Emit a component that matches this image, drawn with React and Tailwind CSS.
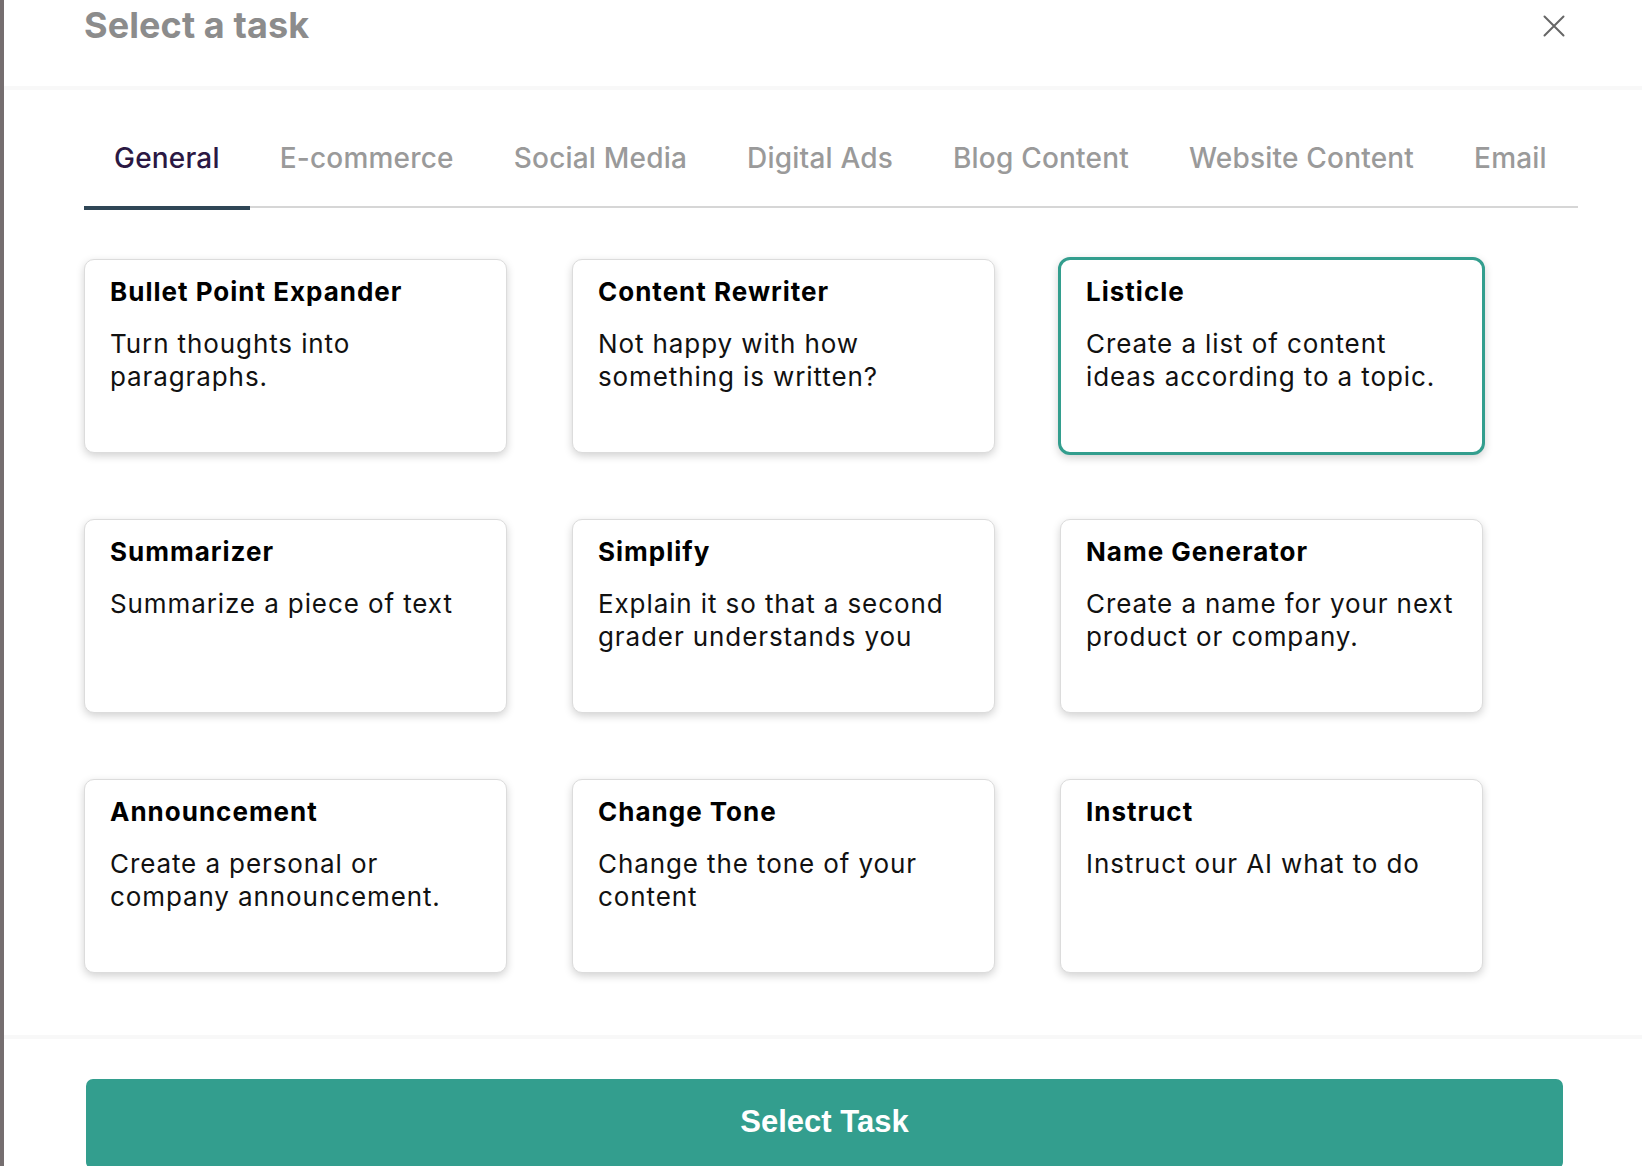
import { useState } from "react";

const tabs = [
  "General",
  "E-commerce",
  "Social Media",
  "Digital Ads",
  "Blog Content",
  "Website Content",
  "Email",
];

const tasks = [
  { title: "Bullet Point Expander", desc: "Turn thoughts into paragraphs." },
  { title: "Content Rewriter", desc: "Not happy with how something is written?" },
  { title: "Listicle", desc: "Create a list of content ideas according to a topic." },
  { title: "Summarizer", desc: "Summarize a piece of text" },
  { title: "Simplify", desc: "Explain it so that a second grader understands you" },
  { title: "Name Generator", desc: "Create a name for your next product or company." },
  { title: "Announcement", desc: "Create a personal or company announcement." },
  { title: "Change Tone", desc: "Change the tone of your content" },
  { title: "Instruct", desc: "Instruct our AI what to do" },
];

function TaskCard({ task, selected, onClick }) {
  return (
    <button
      onClick={onClick}
      className={
        selected
          ? "-m-[2px] h-[198px] rounded-[12px] border-[3px] border-[#339e8e] bg-white px-[25px] pt-[17px] text-left align-top shadow-[0_3px_9px_rgba(0,0,0,0.18)]"
          : "h-[194px] rounded-[10px] border border-[#dcdcdc] bg-white px-[25px] pt-[17px] text-left align-top shadow-[0_3px_9px_rgba(0,0,0,0.18)]"
      }
    >
      <div className="flex h-full flex-col items-start justify-start">
        <h3 className="text-[26px] leading-[30px] font-bold tracking-[1px] text-black">{task.title}</h3>
        <p className="mt-[20px] text-[26px] leading-[33px] tracking-[0.9px] text-[#111]">{task.desc}</p>
      </div>
    </button>
  );
}

export default function App() {
  const [activeTab, setActiveTab] = useState("General");
  const [selected, setSelected] = useState("Listicle");

  return (
    <div className="h-[1166px] overflow-hidden bg-[#756e6f] pl-[4px] font-['Inter',sans-serif]">
      <div className="h-full bg-white">
        <div className="flex h-[86px] items-start justify-between pt-[3px] pl-[80px] pr-[77px]">
          <h2 className="text-[36px] leading-[44px] font-bold tracking-[0.1px] text-[#8c8c8c]">Select a task</h2>
          <button className="mt-[12px] text-[#666]" aria-label="Close">
            <svg width="22" height="22" viewBox="0 0 22 22" fill="none">
              <path d="M1.5 1.5 20.5 20.5M20.5 1.5 1.5 20.5" stroke="currentColor" strokeWidth="2" strokeLinecap="round" />
            </svg>
          </button>
        </div>
        <div className="h-[4px] bg-[#f8f8f8]" />

        <div className="pl-[80px]">
          <div className="mt-[51px] flex w-[1494px] border-b-2 border-[#d6d6d6]">
            {tabs.map((tab) => (
              <button
                key={tab}
                onClick={() => setActiveTab(tab)}
                className={
                  activeTab === tab
                    ? "-mb-[4px] shrink-0 whitespace-nowrap border-b-4 border-[#2f4656] px-[30px] pb-[31px] text-[28px] leading-[34px] font-medium tracking-[0.2px] text-[#2b1843]"
                    : "-mb-[4px] shrink-0 whitespace-nowrap border-b-4 border-transparent px-[30px] pb-[31px] text-[28px] leading-[34px] font-medium tracking-[0.2px] text-[#9a9a9a]"
                }
              >
                {tab}
              </button>
            ))}
          </div>

          <div className="mt-[51px] grid grid-cols-[repeat(3,423px)] gap-x-[65px] gap-y-[66px]">
            {tasks.map((task) => (
              <TaskCard
                key={task.title}
                task={task}
                selected={selected === task.title}
                onClick={() => setSelected(task.title)}
              />
            ))}
          </div>
        </div>

        <div className="mt-[62px] h-[4px] bg-[#f8f8f8]" />

        <button className="mt-[40px] ml-[82px] h-[90px] w-[1477px] rounded-[7px] bg-[#339e8e] pb-[4px] font-['Liberation_Sans',Arial,sans-serif] text-[31px] font-bold text-white">
          Select Task
        </button>
      </div>
    </div>
  );
}
